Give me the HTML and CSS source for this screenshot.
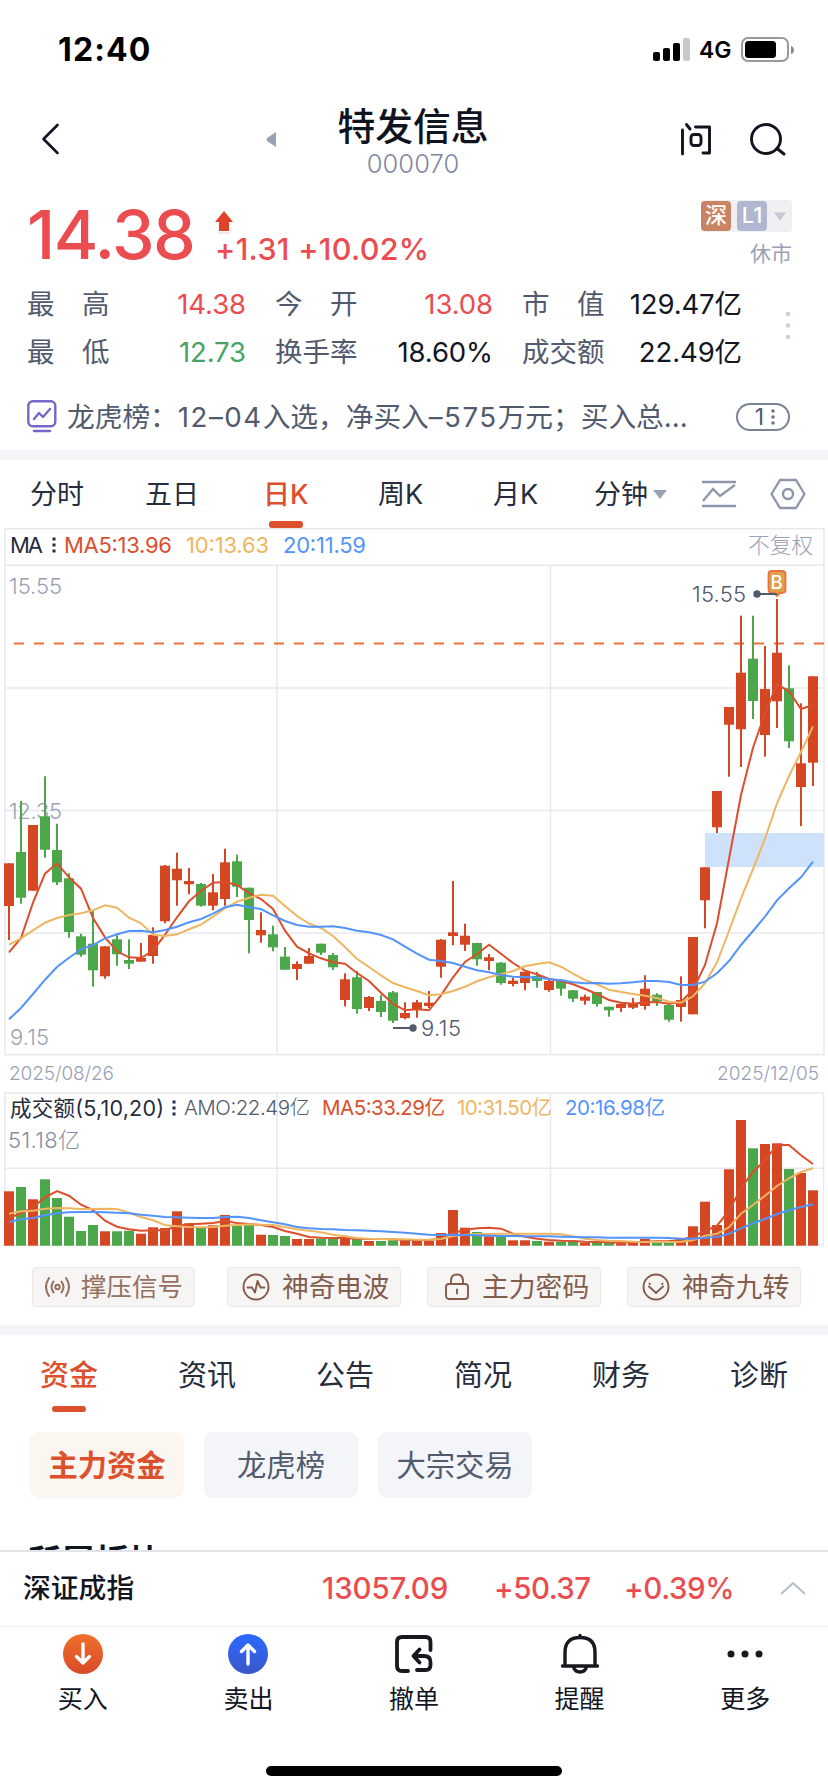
FILE: index.html
```html
<!DOCTYPE html>
<html lang="zh-CN">
<head>
<meta charset="utf-8">
<title>特发信息 000070</title>
<link rel="stylesheet" href="styles.css">
</head>
<body>
<div class="phone">
  <header class="status">
    <span class="clock">12:40</span>
    <svg class="signal" width="38" height="24" viewBox="0 0 38 24"><g fill="#000"><rect x="0" y="14" width="7" height="9" rx="2"/><rect x="10" y="10" width="7" height="13" rx="2"/><rect x="20" y="5" width="7" height="18" rx="2"/></g><rect x="30" y="0" width="7" height="23" rx="2" fill="#c9c9c9"/></svg>
    <span class="net">4G</span>
    <svg class="battery" width="54" height="26" viewBox="0 0 54 26"><rect x="1" y="1" width="46" height="23" rx="6" fill="none" stroke="#999" stroke-width="2"/><rect x="4" y="4" width="31" height="17" rx="3.500" fill="#000"/><path d="M50 9q3 1 3 4t-3 4z" fill="#8a8a8a"/></svg>
  </header>

  <nav class="nav">
    <svg class="back" width="20" height="32" viewBox="0 0 20 32"><path d="M16.500 2 2.500 16l14 14" fill="none" stroke="#10141f" stroke-width="2.600" stroke-linecap="round" stroke-linejoin="round"/></svg>
    <svg class="prev" width="10" height="15" viewBox="0 0 10 15"><path d="M10 0v15L1 9q-1-1.500 0-3z" fill="#9aa1b5"/></svg>
    <div class="title"><h1>特发信息</h1><span>000070</span></div>
    <svg class="ask" width="32" height="34" viewBox="0 0 32 34"><g fill="none" stroke="#10141f" stroke-width="2.900" stroke-linecap="round" stroke-linejoin="round"><path d="M2.500 8v24M6.500 2.500l3.500 4.500M15.500 5h14v26H23"/><rect x="11" y="12.500" width="10" height="11" rx="3"/></g></svg>
    <svg class="search" width="38" height="34" viewBox="0 0 38 34"><g fill="none" stroke="#10141f" stroke-width="2.900" stroke-linecap="round"><circle cx="17" cy="17" r="14.500"/><path d="m28 26.500 7 5.500"/></g></svg>
  </nav>

  <section class="quote">
    <span class="price">14.38</span>
    <div class="delta">
      <svg width="20" height="24" viewBox="0 0 20 24"><path d="M10 1 19 12h-4v9H5v-9H1z" fill="#df4428"/><path d="M5 22h10v2H5z" fill="#fbe6df"/></svg>
      <span>+1.31 +10.02%</span>
    </div>
    <div class="market">
      <div class="badges"><b class="sz">深</b><b class="l1">L1</b><svg width="14" height="9" viewBox="0 0 14 9"><path d="M1 .5h12L7 8.500z" fill="#c6cad6"/></svg></div>
      <span>休市</span>
    </div>
  </section>

  <section class="stats">
    <dl>
      <div><dt>最<i></i>高</dt><dd class="up">14.38</dd></div>
      <div><dt>今<i></i>开</dt><dd class="up">13.08</dd></div>
      <div><dt>市<i></i>值</dt><dd>129.47亿</dd></div>
      <div><dt>最<i></i>低</dt><dd class="down">12.73</dd></div>
      <div><dt>换手率</dt><dd>18.60%</dd></div>
      <div><dt>成交额</dt><dd>22.49亿</dd></div>
    </dl>
    <svg width="6" height="30" viewBox="0 0 6 30"><g fill="#cdd0d9"><circle cx="3" cy="3" r="2.300"/><circle cx="3" cy="14.500" r="2.300"/><circle cx="3" cy="26" r="2.300"/></g></svg>
  </section>

  <section class="news">
    <svg width="30" height="33" viewBox="0 0 30 33"><g fill="none" stroke="#7468c8" stroke-width="2.400" stroke-linecap="round" stroke-linejoin="round"><rect x="1.300" y="1.300" width="27" height="25" rx="4.500"/><path d="m7 19 5-6 4 4 7-8M7 31h16"/></g></svg>
    <p>龙虎榜：<em>12–04</em>入选，净买入<em>–575</em>万元；买入总…</p>
    <span class="count">1<svg width="4" height="18" viewBox="0 0 4 18"><g fill="#6d768c"><circle cx="2" cy="3" r="1.800"/><circle cx="2" cy="9" r="1.800"/><circle cx="2" cy="15" r="1.800"/></g></svg></span>
  </section>

  <div class="gap"></div>

  <nav class="periods">
    <a>分时</a><a>五日</a><a class="on">日K</a><a>周K</a><a>月K</a>
    <a class="more">分钟<svg width="14" height="9" viewBox="0 0 14 9"><path d="M0 0h14L7 9z" fill="#9aa1b5"/></svg></a>
    <svg class="style" width="36" height="28" viewBox="0 0 36 28"><g fill="none" stroke="#9096aa" stroke-width="2.300"><path d="M1 2h34M1 26h34M2 21l10-12 7 7L34 5"/></g></svg>
    <svg class="config" width="36" height="32" viewBox="0 0 36 32"><g fill="none" stroke="#9096aa" stroke-width="2.400" stroke-linejoin="round"><path d="M10 2h16l8.500 14L26 30H10L1.500 16z"/><circle cx="18" cy="16" r="5"/></g></svg>
  </nav>

  <svg class="chart" id="chart" width="828" height="722" viewBox="0 528 828 722"></svg>

  <section class="signals">
    <a><svg width="25" height="24" viewBox="0 0 25 24"><g fill="none" stroke="#94705f" stroke-width="2" stroke-linecap="round"><circle cx="12.500" cy="12" r="2.200"/><path d="M8.500 6.500q-4 5.500 0 11M16.500 6.500q4 5.500 0 11M4 3q-6 9 0 18M21 3q6 9 0 18"/></g></svg>撑压信号</a>
    <a><svg width="28" height="28" viewBox="0 0 28 28"><g fill="none" stroke="#845c4b" stroke-width="1.900" stroke-linejoin="round" stroke-linecap="round"><circle cx="14" cy="14" r="12.500"/><path d="M5.500 14.500H10l3 5L15.500 8l3 6.500h4"/></g></svg>神奇电波</a>
    <a><svg width="26" height="28" viewBox="0 0 26 28"><g fill="none" stroke="#845c4b" stroke-width="1.900" stroke-linecap="round"><rect x="2" y="11" width="22" height="15" rx="3"/><path d="M7 11V8q0-6.500 6-6.500T19 8v3M13 16.500v4"/></g></svg>主力密码</a>
    <a><svg width="28" height="28" viewBox="0 0 28 28"><g fill="none" stroke="#845c4b" stroke-width="1.900" stroke-linecap="round"><circle cx="14" cy="14" r="12.500"/><path d="m7.500 10.500.3.500M7 13.500l7 6.500 7-6.500M20.500 10.500l-.3.500"/></g></svg>神奇九转</a>
  </section>

  <div class="gap"></div>

  <nav class="sections"><a class="on">资金</a><a>资讯</a><a>公告</a><a>简况</a><a>财务</a><a>诊断</a></nav>
  <div class="chips"><a class="on">主力资金</a><a>龙虎榜</a><a>大宗交易</a></div>
  <div class="peek"><h2>所属板块</h2></div>

  <section class="index">
    <b>深证成指</b><span class="v1">13057.09</span><span class="v2">+50.37</span><span class="v3">+0.39%</span>
    <svg width="26" height="14" viewBox="0 0 26 14"><path d="m1 13 12-11 12 11" fill="none" stroke="#b4bacb" stroke-width="2"/></svg>
  </section>

  <nav class="actions">
    <a><svg width="42" height="42" viewBox="0 0 42 42"><defs><linearGradient id="buy" x2="0" y2="1"><stop stop-color="#f0702a"/><stop offset="1" stop-color="#d84a2b"/></linearGradient></defs><circle cx="21" cy="21" r="20" fill="url(#buy)"/><path d="M21 11v18M14.500 23.500l6.500 6.500 6.500-6.500" fill="none" stroke="#fff" stroke-width="3.400" stroke-linecap="round" stroke-linejoin="round"/></svg>买入</a>
    <a><svg width="42" height="42" viewBox="0 0 42 42"><defs><linearGradient id="sell" x2="0" y2="1"><stop stop-color="#2c69ff"/><stop offset="1" stop-color="#3a58c8"/></linearGradient></defs><circle cx="21" cy="21" r="20" fill="url(#sell)"/><path d="M21 31V13M14.500 18.500l6.500-6.500 6.500 6.500" fill="none" stroke="#fff" stroke-width="3.400" stroke-linecap="round" stroke-linejoin="round"/></svg>卖出</a>
    <a><svg width="42" height="42" viewBox="0 0 42 42"><g fill="none" stroke="#16191f" stroke-width="3.800" stroke-linecap="round" stroke-linejoin="round"><path d="M37.500 17V9q0-5-5-5H9Q4 4 4 9v24q0 5 5 5h6"/><path d="M21 23h10q6.500 0 6.500 6v3q0 5-5 5H24M26.500 16.500 20.500 23l6 6.500"/></g></svg>撤单</a>
    <a><svg width="42" height="42" viewBox="0 0 42 42"><g fill="none" stroke="#16191f" stroke-width="3.400" stroke-linecap="round" stroke-linejoin="round"><path d="M3.500 33h35M6 32V19Q6 4.500 21 4.500T36 19v13M21 2.500v2"/><path d="M14.500 34q1.500 5 6.500 5t6.500-5"/></g></svg>提醒</a>
    <a><svg width="42" height="42" viewBox="0 0 42 42"><g fill="#16191f"><circle cx="7" cy="21" r="3.500"/><circle cx="21" cy="21" r="3.500"/><circle cx="35" cy="21" r="3.500"/></g></svg>更多</a>
  </nav>
  <div class="home"></div>
</div>
<script src="chart.js"></script>
</body>
</html>
```
FILE: styles.css
```css
* { box-sizing: border-box; }
body {
  margin: 0;
  background: #fff;
  color: #12161f;
  font-family: Inter, "Noto Sans CJK SC", sans-serif;
}
svg { display: block; flex: none; }
h1, h2, p, dl, dd { margin: 0; }
.phone { width: 828px; height: 1792px; overflow: hidden; display: flex; flex-direction: column; }
.phone > * { flex: none; }

.status { height: 96px; padding: 4px 33px 0 58px; display: flex; align-items: center; color: #000; }
.clock { flex: 1; font-size: 32px; line-height: 36px; font-weight: 700; letter-spacing: 1.100px; }
.net { font-size: 23px; font-weight: 600; margin: 0 9px 0 8px; width: 33px; }

.nav { height: 94px; display: flex; align-items: center; padding: 0 41px; }
.nav .back { margin-top: -8px; }
.nav .prev { margin: -8px 0 0 205px; }
.title { width: 300px; margin-left: -11px; display: flex; flex-direction: column; align-items: center; margin-top: -2px; }
.title h1 { font-size: 37.800px; line-height: 43px; font-weight: 500; color: #10141f; }
.title span { font-size: 25.500px; line-height: 31px; font-weight: 300; color: #7f88a0; letter-spacing: .1px; }
.nav .ask { margin: -8px 0 0 119px; }
.nav .search { margin: -8px 0 0 37px; }

.quote { height: 90px; display: flex; padding: 0 36px 0 27px; }
.price { width: 185px; font-size: 68px; line-height: 88px; font-weight: 500; letter-spacing: -1.500px; color: #ea4c50; }
.delta { flex: 1; padding-top: 20px; color: #ea4c50; }
.delta svg { margin-left: 2px; }
.delta span { display: block; margin: -4px 0 0 3px; font-size: 30.500px; line-height: 38px; font-weight: 500; letter-spacing: .3px; white-space: nowrap; }
.market { display: flex; flex-direction: column; align-items: flex-end; padding-top: 10px; color: #9aa1b5; font-size: 21px; line-height: 43px; }
.badges { display: flex; align-items: center; background: #f0f0f3; border-radius: 4px; height: 32px; padding-right: 5px; gap: 6px; }
.badges b { width: 30px; height: 30px; border-radius: 4px; color: #fff; font-size: 22px; line-height: 29px; font-weight: 500; text-align: center; }
.badges .sz { background: #c98464; }
.badges .l1 { background: #b0b7d1; }

.stats { height: 98px; padding: 0 37px 0 27px; display: flex; }
.stats dl { width: 715px; display: grid; grid-template-columns: 219px 218px 220px; column-gap: 29px; grid-auto-rows: 48px; }
.stats dl div { display: flex; justify-content: space-between; align-items: center; }
.stats dt, .stats dd { font-size: 27.500px; line-height: 48px; white-space: nowrap; }
.stats dt { color: #525a6e; }
.stats dt i { display: inline-block; width: 27.500px; }
.stats dd { letter-spacing: -.1px; }
.stats > svg { margin: 31px 0 0 43px; }
.stats .up { color: #ea4c50; }
.stats .down { color: #47a466; }

.news { height: 72px; padding: 5px 38px 0 27px; display: flex; align-items: center; color: #525a6e; }
.news p { flex: 1; margin-left: 10px; font-size: 27.700px; line-height: 48px; white-space: nowrap; }
.news em { font-style: normal; letter-spacing: 1.500px; }
.count { width: 54px; height: 28px; border: 2px solid #7b8397; border-radius: 14px; font-size: 23px; display: flex; align-items: center; justify-content: center; gap: 7px; padding-left: 4px; }

.gap { height: 10px; background: #f4f5f8; }

.periods { height: 68px; display: flex; align-items: center; font-size: 27px; color: #262d3d; padding: 0 22px 0 30px; }
.periods a { width: 54px; height: 68px; line-height: 69px; white-space: nowrap; }
.periods a + a { margin-left: 61px; }
.periods .on { width: 46px; margin-left: 64px; color: #dc502d; font-weight: 500; position: relative; }
.periods .on + a { width: 46px; margin-left: 69px; }
.periods .on + a + a { width: 46px; margin-left: 69px; }
.on::after { content: ""; position: absolute; left: 50%; bottom: 0; width: 34px; height: 7px; margin-left: -17px; border-radius: 3px; background: #dc502d; }
.periods .more { width: 74px; margin-left: 55px; display: flex; align-items: center; gap: 5px; }
.style { margin-left: 33px; }
.config { margin-left: auto; }

.chart { font-family: Inter, "Noto Sans CJK SC", sans-serif; }

.signals { height: 75px; padding: 17px 26px 0 32px; display: flex; gap: 26px; }
.signals a { height: 40px; width: 174px; border: 1px solid #eee6e3; border-radius: 4px; background: #f7f5f4; color: #845c4b; font-size: 26.800px; line-height: 38px; display: flex; align-items: center; gap: 12px; padding-left: 14px; white-space: nowrap; }
.signals a:first-child { width: 163px; margin-right: 6px; font-size: 25.500px; color: #94705f; gap: 11px; padding-left: 12px; }
.signals a:nth-child(3) { padding-left: 16px; }

.sections { height: 87px; display: grid; grid-template-columns: repeat(6, 138px); text-align: center; font-size: 29px; line-height: 81px; color: #262d3d; }
.sections .on { position: relative; color: #dc502d; font-weight: 500; height: 78px; }
.sections .on::after { height: 6px; bottom: 1px; }

.chips { display: flex; gap: 20px; padding: 10px 30px 0; }
.chips a { width: 154px; height: 66px; border-radius: 9px; background: #f4f5f8; color: #525a6e; font-size: 29.300px; line-height: 67px; text-align: center; }
.chips .on { background: #fcf6f0; color: #dc502d; font-weight: 600; }
.chips .on::after { display: none; }

.peek { height: 52px; padding: 39px 27px 0; overflow: hidden; }
.peek h2 { font-size: 34px; line-height: 50px; font-weight: 700; color: #10141f; }

.index { height: 77px; border-top: 2px solid #e2e4eb; border-bottom: 1px solid #f0f0f3; display: flex; align-items: center; padding: 0 22px 2px 23px; white-space: nowrap; }
.index b { width: 299px; font-size: 27.800px; line-height: 40px; font-weight: 500; }
.index span { font-size: 29.500px; font-weight: 500; color: #ea4c50; }
.index .v1 { width: 172px; letter-spacing: -.1px; }
.index .v2 { width: 130px; letter-spacing: -.5px; }
.index .v3 { letter-spacing: -.4px; }
.index svg { margin-left: auto; }

.actions { display: grid; grid-template-columns: repeat(5, 165.600px); padding-top: 6px; height: 139px; }
.actions a { display: flex; flex-direction: column; align-items: center; font-size: 25px; line-height: 36px; gap: 6px; }

.home { width: 296px; height: 10px; border-radius: 5px; background: #000; margin-left: 266px; }
```
FILE: chart.js
```js
const RED = '#d54623', GREEN = '#4ca64a', LINE_RED = '#db4f2d', AMBER = '#efb661', BLUE = '#5294fb';
const STEP = 12, FIRST = 9;

// [colour, body top, body bottom, wick top, wick bottom]
const candles = [
  ['r',863.3,906,863.3,940],['g',852,897.7,801,903.7],['r',825,890.7,825,890.7],['g',816.3,849.7,776.3,857.7],
  ['g',850,882.3,823.7,885],['g',878.3,932,873.3,937.7],['g',936.3,954.7,933.7,956.7],['g',943.7,970.3,910,986.7],
  ['r',946.3,976.3,946.3,978.7],['g',939.3,954.3,935.3,965.7],['g',960,963.7,939.3,969],['r',958,961.7,943,961.7],
  ['r',935,956,927.3,963.7],['r',865.7,921.3,865,923.3],['r',868.7,880.3,852.7,905.7],['r',881,884.3,868,894.3],
  ['g',884,905.7,883,906.7],['r',892.3,905.7,874,910.3],['r',862.3,899,848.7,905.7],['g',861.3,886.7,854.7,897],
  ['g',887.7,920,887.7,953.3],['r',930,935.3,912.3,942.7],['g',934.3,947.3,925.7,951.3],['g',956.7,969.7,947,969.7],
  ['r',964,969,961.3,980],['r',956,963.7,948,963.7],['g',943.7,952.7,943.7,955],['g',955,967.3,953,970],
  ['r',979.3,1000,973.3,1006.3],['g',977.3,1009,971,1013.7],['r',997,1008,996,1011],['g',1001,1012,995,1017],
  ['g',992.3,1020.7,991,1023],['r',1013,1018,1002.3,1019.3],['r',1002.3,1010,1000,1017.7],['r',1002.7,1006,991,1008],
  ['r',939.7,966.7,939,977.7],['r',932.3,936,881,945.3],['r',935.7,944.7,923.7,951],['g',943,959.3,942.7,965.7],
  ['r',957.3,961,954,970.3],['g',962.7,983,962,984.7],['r',980.7,984,977.7,986.3],['r',971.7,983,971.7,990.3],
  ['g',976,981,972,987.7],['r',981,990,979.7,991.7],['g',979.7,988.7,979.7,995.7],['g',990.3,998.7,990,1002],
  ['r',996.7,1000.7,994.7,1004.7],['g',992,1004,992,1006.7],['g',1006.7,1010.3,1006.7,1016.7],['r',1004,1008,1003.3,1012],
  ['r',1003.7,1007.7,998,1009],['r',988.7,1006,975.3,1009.7],['g',994.7,1001.3,993.3,1006],['g',1005,1019.7,1003.3,1021.7],
  ['r',1000,1007,976.3,1021.7],['r',937,1014.3,937,1014.3],['r',867.3,900.3,867.3,928.3],['r',791,827.3,791,833],
  ['r',707,724.7,707,776.7],['r',672.7,729.3,615.7,767],['g',658.7,701,615.7,719],['r',689,735,646,756.7],
  ['r',652.7,701.3,599,728],['g',688.3,741.3,665.3,748],['r',763.3,787,703.3,826],['r',676.3,762.7,676.3,786]
];

const ma5 = [952.3,938,902.7,873.7,863.3,877.3,888.7,918,937.3,951.3,957.3,958,950.7,934.7,917.3,901.3,891,882.7,882,885,893.3,899,909,930.7,946.7,953.3,958.3,962.3,963.7,973,981,992.7,1004,1010.3,1009.3,1010.3,995.3,977.3,962,954,944.7,953.7,963,970.7,974.3,979,981,984.3,989,994,1000,1002.7,1003.7,1002.3,1002,1003.7,1001.7,990,965,923.3,859,795,747.7,713.3,684.3,691.3,709,705];
const ma10 = [944.7,938.3,930.3,922.7,918,915,913.3,910.3,905.3,907.7,917.7,923.3,934.7,936,934.3,929.3,924.7,916.7,908.3,901.7,897.7,894.7,895.7,906,916,923.7,928,936,947,959,967,975.3,983,987.3,991,995.3,994.3,991,986.7,981.3,977.3,974.3,971,966.3,964,962.3,966.7,973.7,980,984.3,989.7,992,994,995.7,998,1001.7,1002.7,996.3,983.3,962.3,931,898.3,869,838.7,803.3,776,752,726.3];
const ma20 = [1019.3,1008,994,979.7,967,957.7,949.3,945,938.3,934.3,931,930.7,932.3,930,926.7,922.3,919,913.7,907.3,904.7,907.3,909,915.3,921,925,926.7,926.7,926.3,928,930.7,932.3,935,939.3,946.7,953.7,959.7,961,963,966.7,970.3,972.3,975,976.7,977,977.7,979,980.3,982.3,983.3,983,983.7,983.3,982.3,981,981,982,985,985,981.7,973.3,961,945,931,916.7,900.3,888.3,877.3,861.7];

const volTop = [1191.3,1187,1199.3,1179.3,1198,1216.7,1231,1225,1231.3,1231.3,1230.7,1233.7,1227.3,1228,1211.3,1223.3,1227.3,1225.3,1215,1225.7,1225,1234.7,1235,1236,1239,1239,1238.7,1239,1238,1238.7,1241,1241,1240.3,1240.3,1241,1241,1233,1210,1227.7,1232,1236.3,1236.7,1240.3,1240.3,1241,1241.7,1241.7,1241.7,1242.7,1242,1242.3,1243.3,1243,1239,1242,1242,1239,1226.3,1201.7,1225,1169.3,1120,1148.3,1144,1143.3,1169,1173,1190.3];
const VOL_BASE = 1245.7;

// turnover averages, in thirds of a pixel below y = 1060
const amo5 = [474,460,442,412,393,407,434,450,482,500,508,512,511,511,498,493,491,489,483,489,492,495,501,513,521,531,533,534,534,536,537,537,538,540,541,540,536,519,510,505,503,506,521,530,536,540,542,543,545,546,547,548,547,545,544,543,541,529,513,497,452,385,335,302,254,255,286,312];
const amo10 = [461,454,452,446,444,445,447,447,446,447,458,471,481,495,499,501,502,501,497,495,493,494,495,501,508,512,517,524,529,534,536,537,538,538,539,539,537,528,524,522,522,521,521,521,521,521,523,529,536,540,542,543,545,546,546,546,545,541,527,521,502,461,435,407,378,355,336,325];
const amo20 = [486,478,474,466,460,457,456,456,457,458,460,464,467,471,472,473,474,474,471,470,474,481,487,493,501,505,507,508,510,511,512,514,516,518,521,524,525,524,525,526,527,528,528,529,529,529,530,531,532,532,533,533,533,533,533,534,536,536,533,531,521,505,490,477,462,451,441,433];

const x = i => FIRST + STEP * i;
const line = (ys, colour) => `<polyline points="${ys.map((y, i) => x(i) + ',' + y).join(' ')}" fill="none" stroke="${colour}" stroke-width="2"/>`;
const fromThirds = ys => ys.map(v => +(1060 + v / 3).toFixed(1));
const text = (str, x0, y, width, size, colour, weight = 400) =>
  `<text x="${x0}" y="${y}" textLength="${width}" font-size="${size}" fill="${colour}" font-weight="${weight}">${str}</text>`;
const dots = (cx, cy) => [-6, 0, 6].map(d => `<rect x="${cx - 1.5}" y="${cy + d - 1.5}" width="3" height="3" fill="#262d3d"/>`).join('');

let out = '';

out += '<g fill="none" stroke="#e8e9ee" stroke-width="1.500">' +
  '<path d="M5 528.700H824V1054.700H5zM5 565.300H824M5 688H824M5 810.500H824M5 933H824M277 565V1055M550.500 565V1055"/>' +
  '<path d="M5 1093H823.500V1245H5zM5 1168.300H823.500M277 1093V1245M550.500 1093V1245"/></g>';

out += text('15.55', 9, 594, 53, 22, '#9aa1b5', 300) + text('12.35', 9, 819, 53, 22, '#9aa1b5', 300) + text('9.15', 10, 1045, 39, 22, '#9aa1b5', 300);
out += '<rect x="705" y="833" width="119" height="34" fill="#cfe2fb"/>';
out += '<path d="M14 643.500H824" stroke="#e9713b" stroke-width="2.200" stroke-dasharray="10 10"/>';

candles.forEach(([c, top, bottom, hi, lo], i) => {
  const colour = c === 'r' ? RED : GREEN;
  out += `<rect x="${x(i) - 1}" y="${hi}" width="2" height="${(lo - hi).toFixed(1)}" fill="${colour}"/>`;
  out += `<rect x="${x(i) - 5}" y="${top}" width="10" height="${(bottom - top).toFixed(1)}" fill="${colour}"/>`;
  out += `<rect x="${x(i) - 5}" y="${volTop[i]}" width="10" height="${(VOL_BASE - volTop[i]).toFixed(1)}" fill="${colour}"/>`;
});

out += line(ma5, LINE_RED) + line(ma10, AMBER) + line(ma20, BLUE);
out += line(fromThirds(amo5), LINE_RED) + line(fromThirds(amo10), AMBER) + line(fromThirds(amo20), BLUE);

out += '<g stroke="#525a6e" stroke-width="2" fill="#525a6e"><path d="M393 1028h20M757 594h20"/><circle cx="413" cy="1028" r="2.700"/><circle cx="757" cy="594" r="2.700"/></g>';
out += text('9.15', 421, 1036, 40, 22, '#525a6e', 300) + text('15.55', 692, 602, 54, 22, '#525a6e', 300);
out += '<path d="M772 571h10q3.500 0 3.500 3.500v15q0 3.500-3.500 3.500h-2l-3 3-3-3h-2q-3.500 0-3.500-3.500v-15q0-3.500 3.500-3.500z" fill="#dfa052" stroke="#e9713b" stroke-width="1.800"/>';
out += text('B', 770.5, 588.5, 13, 18.5, '#fff', 500);
out += '<path d="M767 594h10" stroke="#525a6e" stroke-width="2"/>';

out += text('MA', 10, 553, 33, 22, '#262d3d') + dots(54, 545);
out += text('MA5:13.96', 64, 553, 108, 22, LINE_RED) + text('10:13.63', 186, 553, 83, 22, AMBER) + text('20:11.59', 283, 553, 83, 22, BLUE);
out += text('不复权', 748, 553, 65, 21.7, '#9aa1b5', 300);

out += text('2025/08/26', 9, 1080, 105, 19, '#9aa1b5', 300) + text('2025/12/05', 717, 1080, 102, 19, '#9aa1b5', 300);
out += text('成交额(5,10,20)', 10, 1116, 154, 21.5, '#262d3d') + dots(174, 1108);
out += text('AMO:22.49亿', 184, 1115, 126, 20.5, '#525a6e', 300) + text('MA5:33.29亿', 322, 1115, 123, 20.5, LINE_RED);
out += text('10:31.50亿', 457, 1115, 95, 20.5, AMBER) + text('20:16.98亿', 565, 1115, 100, 20.5, BLUE);
out += text('51.18亿', 8, 1148, 72, 22, '#858ea3', 300);

document.getElementById('chart').innerHTML = out;
```
